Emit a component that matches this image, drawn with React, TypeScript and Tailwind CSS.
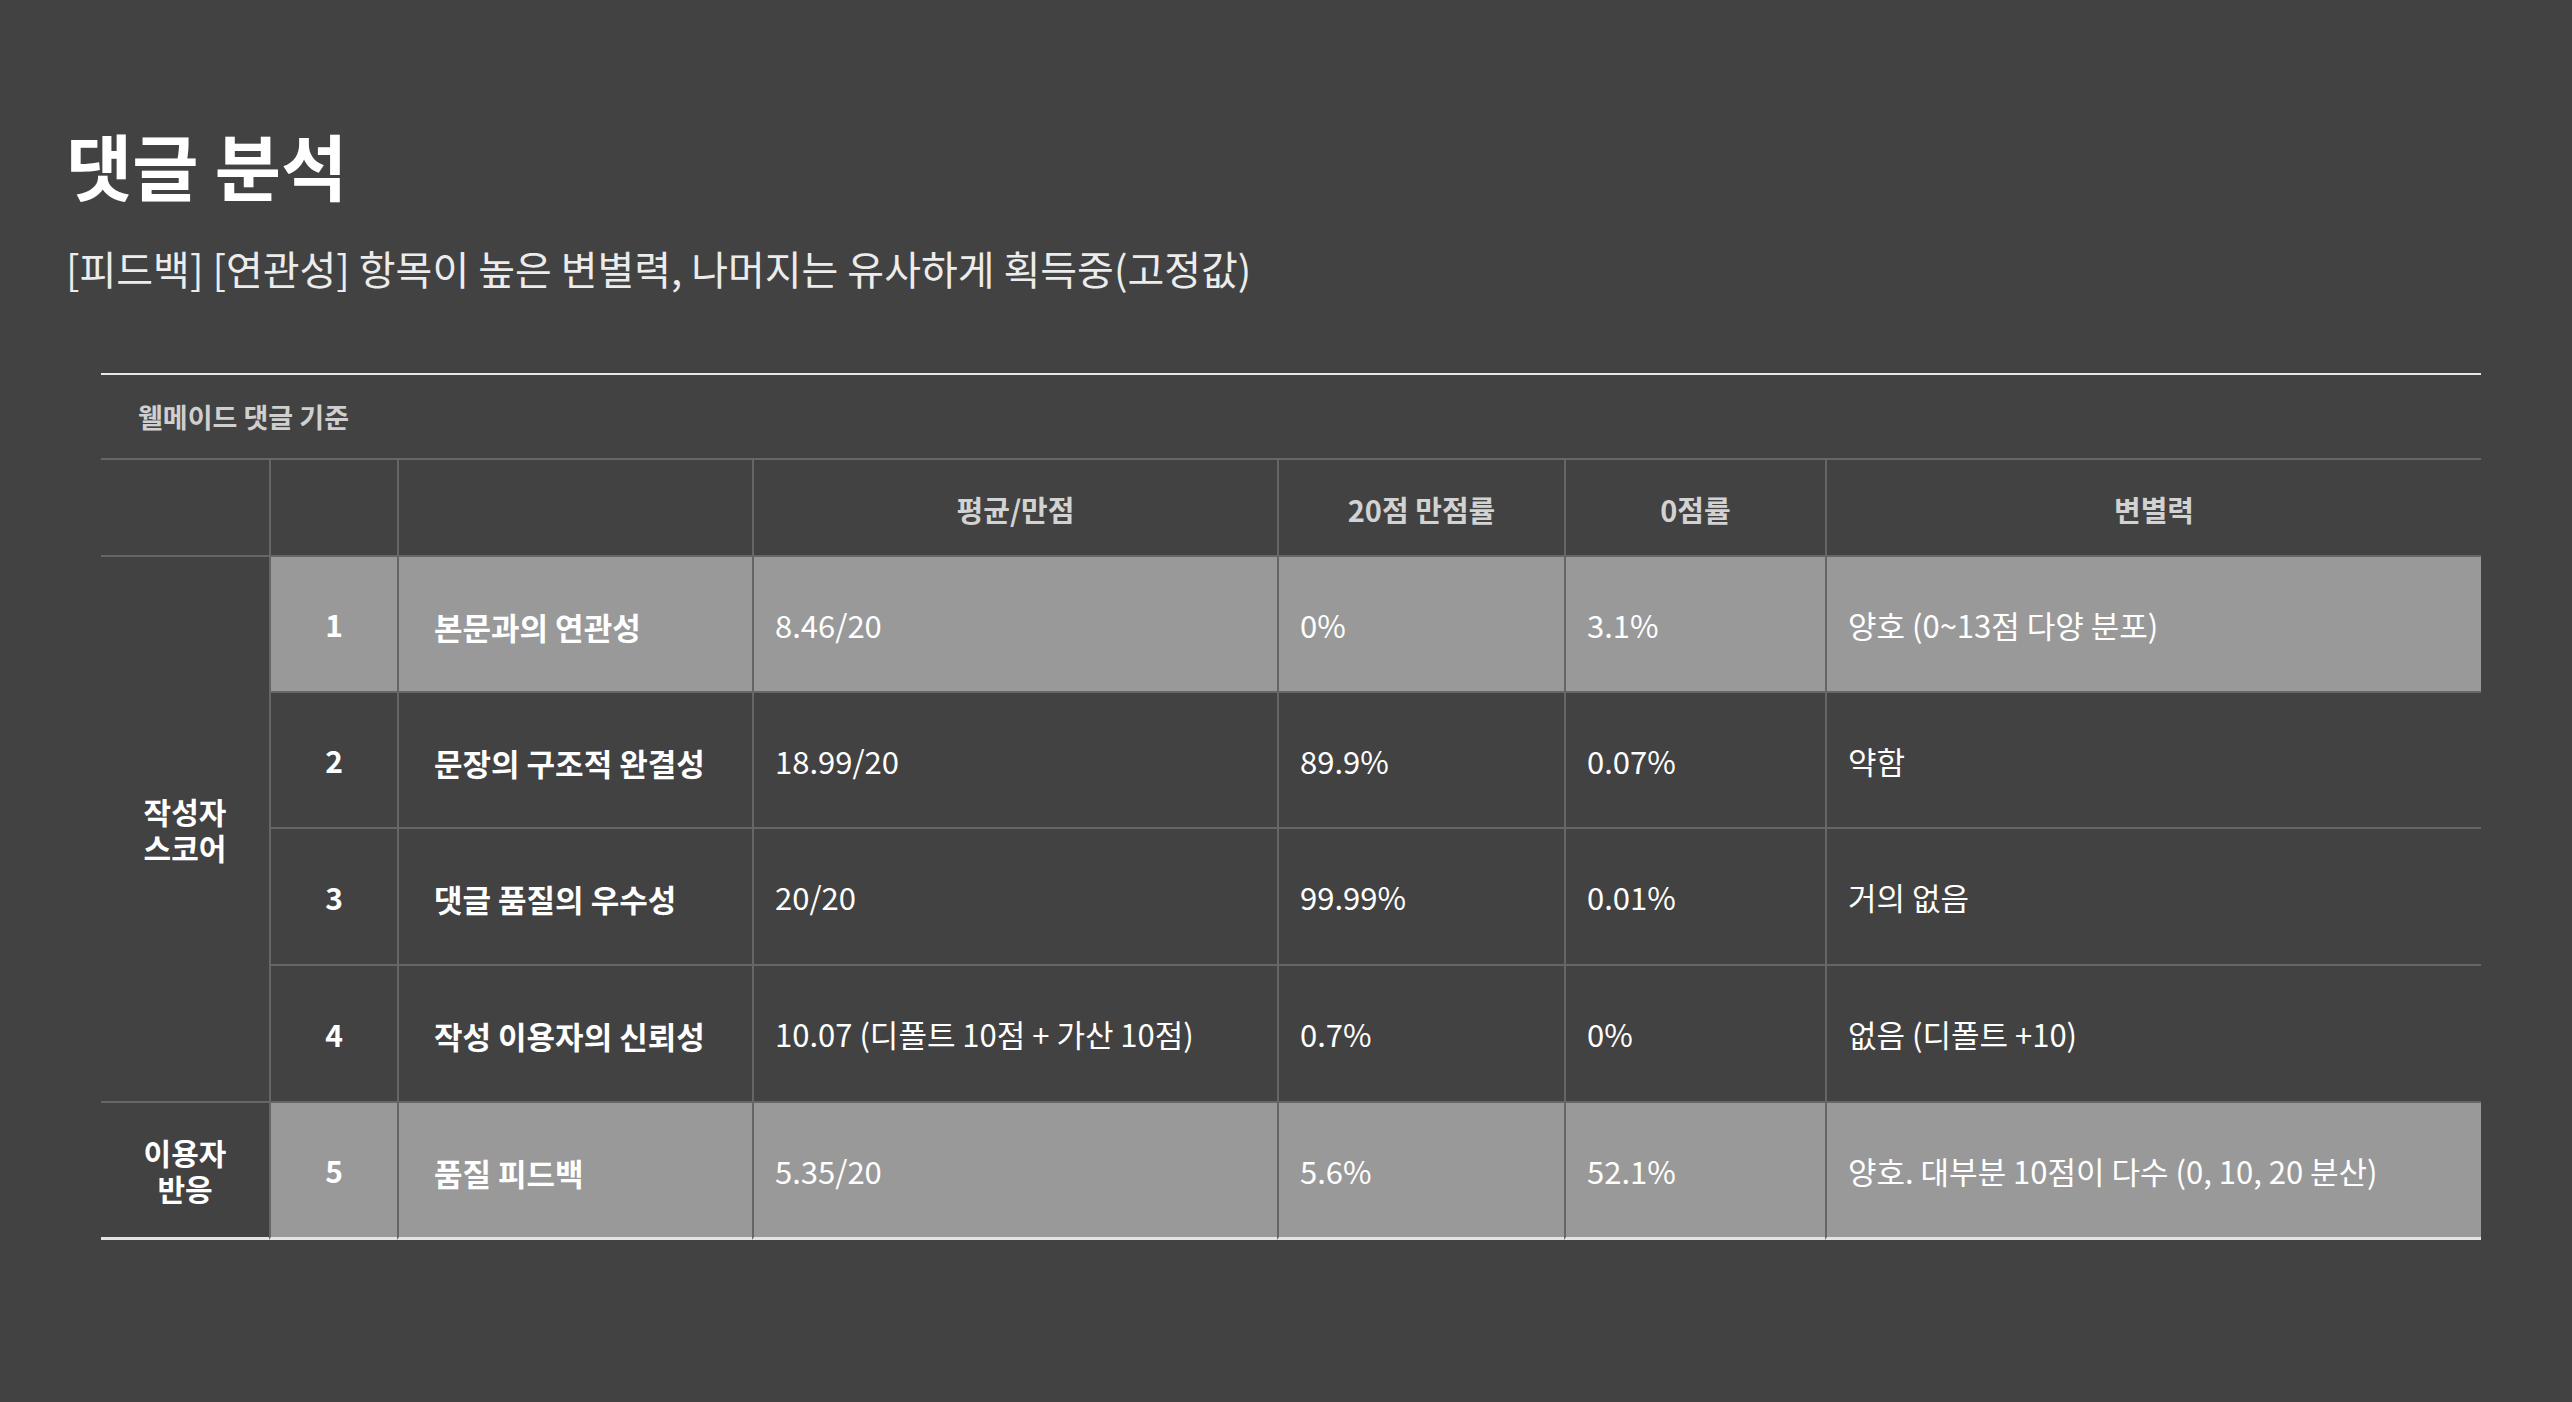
import React from "react";

const FONT = { fontFamily: '"Noto Sans CJK KR", "Noto Sans", sans-serif' };

type Row = {
  no: string;
  label: string;
  avg: string;
  full: string;
  zero: string;
  disc: string;
  gray: boolean;
  tall: boolean;
};

const rows: Row[] = [
  { no: "1", label: "본문과의 연관성", avg: "8.46/20", full: "0%", zero: "3.1%", disc: "양호 (0~13점 다양 분포)", gray: true, tall: false },
  { no: "2", label: "문장의 구조적 완결성", avg: "18.99/20", full: "89.9%", zero: "0.07%", disc: "약함", gray: false, tall: false },
  { no: "3", label: "댓글 품질의 우수성", avg: "20/20", full: "99.99%", zero: "0.01%", disc: "거의 없음", gray: false, tall: true },
  { no: "4", label: "작성 이용자의 신뢰성", avg: "10.07 (디폴트 10점 + 가산 10점)", full: "0.7%", zero: "0%", disc: "없음 (디폴트 +10)", gray: false, tall: true },
  { no: "5", label: "품질 피드백", avg: "5.35/20", full: "5.6%", zero: "52.1%", disc: "양호. 대부분 10점이 다수 (0, 10, 20 분산)", gray: true, tall: false },
];

function BodyRow({ r, last }: { r: Row; last: boolean }) {
  const bg = r.gray ? "bg-[#999999]" : "bg-[#424242]";
  const bb = last ? "border-b-[3px] border-b-[#e4e4e4]" : "border-b-2 border-b-[#666666]";
  const h = r.tall ? "h-[137px]" : last ? "h-[137px]" : "h-[136px]";
  const base = `${h} border-l-2 border-l-[#666666] ${bb} ${bg} flex items-center text-white leading-none`;
  return (
    <>
      <div className={`${base} justify-center text-[30px] font-bold`}>{r.no}</div>
      <div className={`${base} pl-[35px] pt-[4px] text-[31px] font-bold`}>{r.label}</div>
      <div className={`${base} pl-[21px] text-[31px]`}>{r.avg}</div>
      <div className={`${base} pl-[21px] text-[31px]`}>{r.full}</div>
      <div className={`${base} pl-[21px] text-[31px]`}>{r.zero}</div>
      <div className={`${base} pl-[21px] text-[31px]`}>{r.disc}</div>
    </>
  );
}

export default function App() {
  const head = "h-[97px] border-l-2 border-l-[#666666] border-b-2 border-b-[#666666] flex items-center justify-center pt-[3px] text-[29px] font-bold text-[#d2d2d2] leading-none";
  return (
    <div className="min-h-[1402px] w-full bg-[#424242] pl-[66px] pt-[128px]" style={FONT}>
      <h1 className="text-[72px] font-bold leading-none text-white">댓글 분석</h1>
      <p className="mt-[48px] text-[40px] font-normal leading-none text-[#ececec]">
        [피드백] [연관성] 항목이 높은 변별력, 나머지는 유사하게 획득중(고정값)
      </p>
      <div className="ml-[35px] mt-[85px] w-[2380px] border-t-2 border-t-[#e8e8e8]">
        <div className="flex h-[85px] items-center border-b-2 border-b-[#666666] pl-[37px] text-[27px] font-bold leading-none text-[#cfcfcf]">
          웰메이드 댓글 기준
        </div>
        <div className="grid grid-cols-[168px_128px_355px_525px_287px_261px_656px]">
          <div className="h-[97px] border-b-2 border-b-[#666666]" />
          <div className={head} />
          <div className={head} />
          <div className={head}>평균/만점</div>
          <div className={head}>20점 만점률</div>
          <div className={head}>0점률</div>
          <div className={head}>변별력</div>

          <div className="row-span-4 flex flex-col items-center justify-center border-b-2 border-b-[#666666] text-[30px] font-bold leading-[36px] text-white">
            <span>작성자</span>
            <span>스코어</span>
          </div>
          <BodyRow r={rows[0]} last={false} />
          <BodyRow r={rows[1]} last={false} />
          <BodyRow r={rows[2]} last={false} />
          <BodyRow r={rows[3]} last={false} />

          <div className="flex flex-col items-center justify-center border-b-[3px] border-b-[#e4e4e4] text-[30px] font-bold leading-[36px] text-white">
            <span>이용자</span>
            <span>반응</span>
          </div>
          <BodyRow r={rows[4]} last={true} />
        </div>
      </div>
    </div>
  );
}
